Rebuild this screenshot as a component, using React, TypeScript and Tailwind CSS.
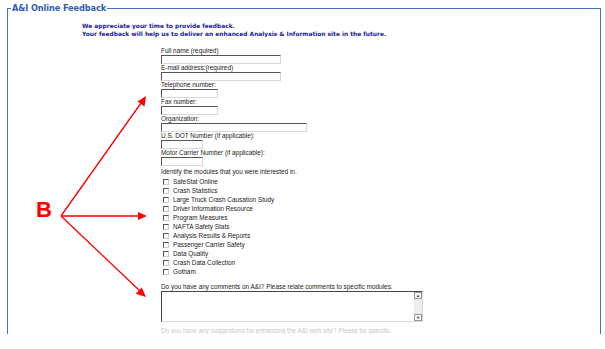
import React from "react";

const fields: { label: string; w: string }[] = [
  { label: "Full name (required)", w: "w-[120px]" },
  { label: "E-mail address:(required)", w: "w-[120px]" },
  { label: "Telephone number:", w: "w-[57px]" },
  { label: "Fax number:", w: "w-[57px]" },
  { label: "Organization:", w: "w-[146px]" },
  { label: "U.S. DOT Number (if applicable):", w: "w-[42px]" },
  { label: "Motor Carrier Number (if applicable):", w: "w-[42px]" },
];

const modules = [
  "SafeStat Online",
  "Crash Statistics",
  "Large Truck Crash Causation Study",
  "Driver Information Resource",
  "Program Measures",
  "NAFTA Safety Stats",
  "Analysis Results & Reports",
  "Passenger Carrier Safety",
  "Data Quality",
  "Crash Data Collection",
  "Gotham",
];

export default function App() {
  return (
    <div className="relative w-[605px] h-[349px] bg-white overflow-hidden">
      <div className="h-[334px] overflow-hidden pl-[7px] pt-[2px]">
        <fieldset className="w-[594px] h-[360px] border border-[#4372c4] px-0 pb-0 pt-0 m-0">
          <legend className="ml-[3px] px-[1px] text-[8.2px] leading-[12px] font-bold text-[#2f5bb7] font-['DejaVu_Sans',sans-serif] tracking-[-0.1px]">
            A&amp;I Online Feedback
          </legend>
          <div className="pl-[74px] pt-[8px] font-['DejaVu_Sans',sans-serif] font-bold text-[5.9px] leading-[8px] text-[#1a1a9c]">
            <div>We appreciate your time to provide feedback.</div>
            <div>Your feedback will help us to deliver an enhanced Analysis &amp; Information site in the future.</div>
          </div>
          <div className="pl-[153px] pt-[9px] font-['Liberation_Sans',Arial,sans-serif] text-[6.4px] text-[#222]">
            {fields.map((f) => (
              <div key={f.label} className="h-[17px] flex flex-col items-start">
                <div className="h-[8px] leading-[8px] whitespace-nowrap">{f.label}</div>
                <div
                  className={`${f.w} h-[9px] border border-t-[#555] border-l-[#555] border-r-[#d8d8d8] border-b-[#d8d8d8] bg-white`}
                />
              </div>
            ))}
            <div className="mt-[2px] h-[8px] leading-[8px]">Identify the modules that you were interested in.</div>
            <div className="mt-[1px] flex flex-col">
              {modules.map((m) => (
                <div key={m} className="h-[9px] flex items-center pl-[2px]">
                  <span className="w-[6px] h-[6px] border border-t-[#555] border-l-[#555] border-r-[#ccc] border-b-[#ccc] bg-white mr-[4px]" />
                  <span className="leading-[8px]">{m}</span>
                </div>
              ))}
            </div>
            <div className="mt-[7px] h-[8px] leading-[8px]">
              Do you have any comments on A&amp;I? Please relate comments to specific modules.
            </div>
            <div className="w-[262px] h-[31px] flex border border-t-[#444] border-l-[#444] border-r-[#d8d8d8] border-b-[#d8d8d8] bg-white">
              <div className="flex-1" />
              <div className="w-[8px] flex flex-col bg-[#ececec]">
                <div className="h-[7px] border border-[#999] bg-[#f4f4f4] flex items-center justify-center text-[4px] leading-none text-[#333]">▲</div>
                <div className="flex-1" />
                <div className="h-[7px] border border-[#999] bg-[#f4f4f4] flex items-center justify-center text-[4px] leading-none text-[#333]">▼</div>
              </div>
            </div>
            <div className="mt-[5px] h-[8px] leading-[8px] text-[#c8c8c8] whitespace-nowrap">
              Do you have any suggestions for enhancing the A&amp;I web site? Please be specific.
            </div>
          </div>
        </fieldset>
      </div>

      <div className="absolute left-[36px] top-[199px] text-[22px] leading-[22px] font-bold text-[#ff0000] font-['Liberation_Sans',Arial,sans-serif]">
        B
      </div>

      <svg className="absolute left-0 top-0" width="605" height="349" viewBox="0 0 605 349">
        <g stroke="#ff0000" strokeWidth="1.3" fill="none">
          <line x1="61" y1="216" x2="141" y2="103" />
          <line x1="61" y1="216" x2="139" y2="216" />
          <line x1="61" y1="216" x2="140" y2="291" />
        </g>
        <g fill="#ff0000">
          <polygon points="146,96 144.5,106.5 137.5,101.5" />
          <polygon points="147,216 138,212 138,220" />
          <polygon points="146,297 135.8,293.7 141.7,287.4" />
        </g>
      </svg>
    </div>
  );
}
